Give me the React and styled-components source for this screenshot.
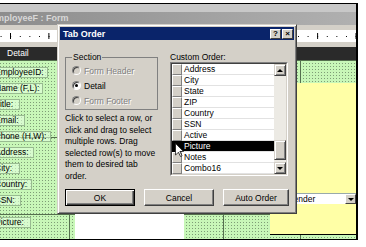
import styled, { createGlobalStyle } from "styled-components";

const GlobalStyle = createGlobalStyle`
  html, body {
    margin: 0;
    padding: 0;
    background: #fff;
  }
  body {
    font-family: "Liberation Sans", Arial, sans-serif;
    font-size: 8.5px;
    color: #000;
  }
`;

const Screen = styled.div`
  position: relative;
  width: 366px;
  height: 247px;
  padding-top: 3px;
  box-sizing: border-box;
  overflow: hidden;
  background: #fff;
`;

const Frame = styled.div`
  width: 358px;
  height: 237px;
  box-sizing: border-box;
  border-top: 1px solid #000;
  border-right: 2px solid #000;
  border-bottom: 1px solid #000;
  overflow: hidden;
  background: #d4d0c8;
`;

/* the form window is scrolled a little to the left */
const FormWindow = styled.div`
  margin-left: -12px;
  width: calc(100% + 12px);
  height: 100%;
  display: flex;
  flex-direction: column;
`;

const TopStrip = styled.div`
  height: 8px;
  background: #c8c8c8;
`;

const TitleBar = styled.div`
  height: 13px;
  padding-left: 2px;
  background: linear-gradient(90deg, #8c8c8c, #b0b0b0);
  color: #d8d8d8;
  font-weight: bold;
  font-size: 9px;
  line-height: 13px;
  white-space: nowrap;
`;

const Spacer = styled.div`
  height: ${(p) => p.$h}px;
  background: #d4d0c8;
`;

const Ruler = styled.div`
  height: 12px;
  background-color: #fff;
  background-image: linear-gradient(90deg, #000 1px, transparent 1px),
    linear-gradient(90deg, #000 1px, transparent 1px);
  background-size: 9.6px 1px, 38.4px 6px;
  background-repeat: repeat-x;
  background-position: 3px 6px, 22px 3px;
`;

const SectionBar = styled.div`
  height: 13px;
  padding-left: 19px;
  background: #2a2a2a;
  color: #fff;
  line-height: 13px;
`;

const Canvas = styled.div`
  position: relative;
  flex: 1;
  background-color: #c8f7b8;
  background-image: linear-gradient(to bottom, #55704e 1px, transparent 1px),
    linear-gradient(to right, #55704e 1px, transparent 1px),
    conic-gradient(from 0deg at 1px 1px, transparent 270deg, #7e9e76 270deg);
  background-size: 77px 77px, 77px 77px, 3px 3px;
  background-position: 0 0, 4px 0, 0 0;
`;

const LabelColumn = styled.div`
  display: flex;
  flex-direction: column;
  align-items: flex-start;
  gap: 5px;
  padding: 7px 0 0 5px;
`;

const FieldLabel = styled.div`
  height: 11px;
  box-sizing: border-box;
  margin-top: ${(p) => p.$gap || 0}px;
  padding: 0 ${(p) => p.$pad || 4}px 0 1px;
  border: 1px solid #98bb90;
  background: rgba(226, 255, 220, 0.6);
  line-height: 9px;
  white-space: nowrap;
`;

const YellowBox = styled.div`
  position: absolute;
  left: 282px;
  top: 23px;
  width: 86px;
  height: 152px;
  box-sizing: border-box;
  background: #ffffa6;
  border-bottom: 1px solid #000;
`;

const Combo = styled.div`
  position: absolute;
  left: 297px;
  top: 133px;
  width: 71px;
  height: 11px;
  display: flex;
  box-sizing: border-box;
  background: #fff;
  border-top: 1px solid #9aa;
`;

const ComboText = styled.div`
  flex: 1;
  padding-left: 2px;
  line-height: 10px;
`;

const ComboButton = styled.div`
  width: 11px;
  display: flex;
  align-items: center;
  justify-content: center;
  box-sizing: border-box;
  background: #d4d0c8;
  border: 1px solid;
  border-color: #fff #404040 #404040 #fff;
`;

const Arrow = styled.span`
  width: 0;
  height: 0;
  border-left: 3px solid transparent;
  border-right: 3px solid transparent;
  ${(p) =>
    p.$up ? "border-bottom: 3px solid #000;" : "border-top: 3px solid #000;"}
`;

const PictureFrame = styled.div`
  position: absolute;
  left: 87px;
  top: 150px;
  width: 109px;
  height: 40px;
  background: #fff;
`;

/* ---------- dialog ---------- */

const Dialog = styled.div`
  position: absolute;
  left: 57px;
  top: 24px;
  width: 240px;
  height: 190px;
  box-sizing: border-box;
  padding: 2px;
  background: #d4d0c8;
  border: 1px solid;
  border-color: #d4d0c8 #404040 #404040 #d4d0c8;
  box-shadow: inset 1px 1px #fff, inset -1px -1px #808080;
  display: flex;
  flex-direction: column;
`;

const Caption = styled.div`
  height: 13px;
  display: flex;
  align-items: center;
  justify-content: space-between;
  padding: 0 1px 0 3px;
  background: #0a246a;
`;

const CaptionText = styled.span`
  color: #fff;
  font-weight: bold;
  font-size: 9px;
`;

const CaptionButtons = styled.div`
  display: flex;
  gap: 1px;
`;

const CaptionButton = styled.div`
  width: 11px;
  height: 10px;
  box-sizing: border-box;
  background: #d4d0c8;
  border: 1px solid;
  border-color: #fff #404040 #404040 #fff;
  font-weight: bold;
  font-size: 8px;
  line-height: 8px;
  text-align: center;
`;

const DialogBody = styled.div`
  padding: 12px 0 0 5px;
`;

const Columns = styled.div`
  display: grid;
  grid-template-columns: 93px 118px;
  column-gap: 12px;
  align-items: start;
`;

const Column = styled.div`
  display: flex;
  flex-direction: column;
`;

const GroupBox = styled.fieldset`
  margin: 0;
  padding: 1px 0 1px 6px;
  min-width: 0;
  border: 1px solid #808080;
`;

const Legend = styled.legend`
  padding: 0 1px;
  line-height: 10px;
`;

const RadioRow = styled.label`
  display: flex;
  align-items: center;
  gap: 3px;
  height: 15px;
  color: ${(p) => (p.$disabled ? "#808080" : "#000")};
  text-shadow: ${(p) => (p.$disabled ? "1px 1px #fff" : "none")};
`;

const RadioDot = styled.span`
  position: relative;
  width: 9px;
  height: 9px;
  box-sizing: border-box;
  border-radius: 50%;
  border: 1px solid;
  border-color: #808080 #fff #fff #808080;
  background: ${(p) => (p.$disabled ? "#d4d0c8" : "#fff")};
  box-shadow: inset 1px 1px #404040;

  &::after {
    content: "";
    display: ${(p) => (p.$checked ? "block" : "none")};
    position: absolute;
    left: 2px;
    top: 2px;
    width: 3px;
    height: 3px;
    border-radius: 50%;
    background: #000;
  }
`;

const Hint = styled.p`
  margin: 3px 0 0;
  line-height: 11.5px;
`;

const ListLabel = styled.div`
  line-height: 10px;
`;

const ListBox = styled.div`
  position: relative;
  height: 114px;
  box-sizing: border-box;
  border: 1px solid;
  border-color: #808080 #fff #fff #808080;
`;

const ListInner = styled.div`
  height: 100%;
  box-sizing: border-box;
  display: flex;
  border: 1px solid;
  border-color: #404040 #d4d0c8 #d4d0c8 #404040;
  background: #fff;
`;

const Rows = styled.div`
  flex: 1;
  display: flex;
  flex-direction: column;
`;

const Row = styled.div`
  display: flex;
  height: 11px;
`;

const Selector = styled.div`
  width: 10px;
  box-sizing: border-box;
  background: ${(p) => (p.$active ? "#000" : "#d4d0c8")};
  border: 1px solid;
  border-color: ${(p) =>
    p.$active ? "#000" : "#fff #808080 #808080 #fff"};
`;

const RowText = styled.div`
  flex: 1;
  box-sizing: border-box;
  padding-left: 2px;
  line-height: 10px;
  border-bottom: 1px solid #e2e2e2;
  background: ${(p) => (p.$active ? "#000" : "#fff")};
  color: ${(p) => (p.$active ? "#fff" : "#000")};
`;

const ScrollBar = styled.div`
  width: 12px;
  display: flex;
  flex-direction: column;
  background-color: #eceae4;
`;

const ScrollButton = styled.div`
  height: 12px;
  display: flex;
  align-items: center;
  justify-content: center;
  box-sizing: border-box;
  background: #d4d0c8;
  border: 1px solid;
  border-color: #d4d0c8 #404040 #404040 #d4d0c8;
  box-shadow: inset 1px 1px #fff, inset -1px -1px #808080;
`;

const Track = styled.div`
  flex: 1;
  display: flex;
  flex-direction: column;
  justify-content: flex-end;
  padding-bottom: 2px;
`;

const Thumb = styled(ScrollButton)`
  height: 20px;
`;

const Pointer = styled.svg`
  position: absolute;
  left: 4px;
  top: 80px;
`;

const ButtonRow = styled.div`
  display: flex;
  gap: 9px;
  margin-top: 7px;
`;

const PushButton = styled.div`
  width: ${(p) => p.$w}px;
  height: 17px;
  box-sizing: border-box;
  display: flex;
  align-items: center;
  justify-content: center;
  background: #d4d0c8;
  border: 1px solid;
  border-color: ${(p) => (p.$default ? "#000" : "#fff #404040 #404040 #fff")};
  box-shadow: ${(p) =>
    p.$default
      ? "inset 1px 1px #fff, inset -1px -1px #404040, inset -2px -2px #808080"
      : "inset -1px -1px #808080"};
`;

const labels = [
  { text: "EmployeeID:", pad: 3 },
  { text: "Name (F,L):", pad: 3 },
  { text: "Title:", pad: 6 },
  { text: "Email:", pad: 5 },
  { text: "Phone (H,W):", pad: 3 },
  { text: "Address:", pad: 4 },
  { text: "City:", pad: 7 },
  { text: "Country:", pad: 4 },
  { text: "SSN:", pad: 5 },
  { text: "Picture:", pad: 6, gap: 6 },
];

const orderItems = [
  "Address",
  "City",
  "State",
  "ZIP",
  "Country",
  "SSN",
  "Active",
  "Picture",
  "Notes",
  "Combo16",
];

const sections = [
  { name: "Form Header", disabled: true },
  { name: "Detail", checked: true },
  { name: "Form Footer", disabled: true },
];

const App = () => {
  return (
    <>
      <GlobalStyle />
      <Screen>
        <Frame>
          <FormWindow>
            <TopStrip />
            <TitleBar>EmployeeF : Form</TitleBar>
            <Spacer $h={5} />
            <Ruler />
            <Spacer $h={5} />
            <SectionBar>Detail</SectionBar>
            <Canvas>
              <LabelColumn>
                {labels.map((l) => (
                  <FieldLabel key={l.text} $pad={l.pad} $gap={l.gap}>
                    {l.text}
                  </FieldLabel>
                ))}
              </LabelColumn>
              <YellowBox />
              <Combo>
                <ComboText>Gender</ComboText>
                <ComboButton>
                  <Arrow />
                </ComboButton>
              </Combo>
              <PictureFrame />
            </Canvas>
          </FormWindow>
        </Frame>

        <Dialog>
          <Caption>
            <CaptionText>Tab Order</CaptionText>
            <CaptionButtons>
              <CaptionButton>?</CaptionButton>
              <CaptionButton>×</CaptionButton>
            </CaptionButtons>
          </Caption>
          <DialogBody>
            <Columns>
              <Column>
                <GroupBox>
                  <Legend>Section</Legend>
                  {sections.map((s) => (
                    <RadioRow key={s.name} $disabled={s.disabled}>
                      <RadioDot $disabled={s.disabled} $checked={s.checked} />
                      {s.name}
                    </RadioRow>
                  ))}
                </GroupBox>
                <Hint>
                  Click to select a row, or click and drag to select multiple
                  rows. Drag selected row(s) to move them to desired tab order.
                </Hint>
              </Column>
              <Column>
                <ListLabel>Custom Order:</ListLabel>
                <ListBox>
                  <ListInner>
                    <Rows>
                      {orderItems.map((item) => (
                        <Row key={item}>
                          <Selector $active={item === "Picture"} />
                          <RowText $active={item === "Picture"}>{item}</RowText>
                        </Row>
                      ))}
                    </Rows>
                    <ScrollBar>
                      <ScrollButton>
                        <Arrow $up />
                      </ScrollButton>
                      <Track>
                        <Thumb />
                      </Track>
                      <ScrollButton>
                        <Arrow />
                      </ScrollButton>
                    </ScrollBar>
                  </ListInner>
                  <Pointer width="9" height="14" viewBox="0 0 12 19">
                    <path
                      d="M0.5 0.5 L0.5 16.5 L4.5 12.5 L7.5 18.5 L9.5 17.5 L6.5 11.5 L11.5 11.5 Z"
                      fill="#fff"
                      stroke="#000"
                      strokeWidth="1"
                    />
                  </Pointer>
                </ListBox>
              </Column>
            </Columns>
            <ButtonRow>
              <PushButton $w={70} $default>
                OK
              </PushButton>
              <PushButton $w={70}>Cancel</PushButton>
              <PushButton $w={66}>Auto Order</PushButton>
            </ButtonRow>
          </DialogBody>
        </Dialog>
      </Screen>
    </>
  );
};

export default App;
